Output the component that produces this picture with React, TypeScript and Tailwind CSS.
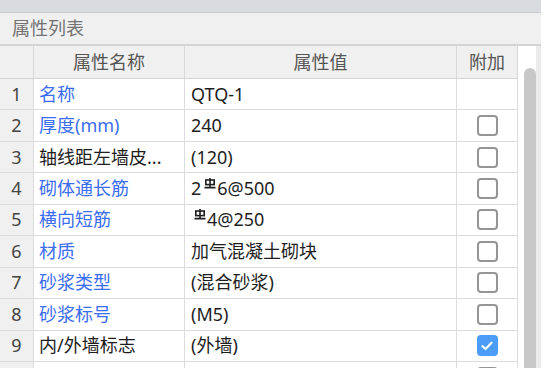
const rows = [
  { no: "1", name: "名称", blue: true, value: "QTQ-1", check: null },
  { no: "2", name: "厚度(mm)", blue: true, value: "240", check: false },
  { no: "3", name: "轴线距左墙皮...", blue: false, value: "(120)", check: false },
  { no: "4", name: "砌体通长筋", blue: true, value: "rebar1", check: false },
  { no: "5", name: "横向短筋", blue: true, value: "rebar2", check: false },
  { no: "6", name: "材质", blue: true, value: "加气混凝土砌块", check: false },
  { no: "7", name: "砂浆类型", blue: true, value: "(混合砂浆)", check: false },
  { no: "8", name: "砂浆标号", blue: true, value: "(M5)", check: false },
  { no: "9", name: "内/外墙标志", blue: false, value: "(外墙)", check: true },
  { no: "", name: "", blue: false, value: "", check: false },
];

function Rebar({ className }: { className?: string }) {
  return (
    <svg width="12" height="11" viewBox="0 0 12 11" className={className}>
      <rect x="1.8" y="2" width="8.4" height="4.6" fill="none" stroke="currentColor" strokeWidth="1.6" />
      <path d="M6 0V9.6M0.5 9.6H11.5" stroke="currentColor" strokeWidth="1.6" fill="none" />
    </svg>
  );
}

function Value({ v }: { v: string }) {
  if (v === "rebar1") {
    return (
      <>
        <span>2</span>
        <Rebar className="ml-[3px] mr-[1px] mb-[10px]" />
        <span>6@500</span>
      </>
    );
  }
  if (v === "rebar2") {
    return (
      <>
        <Rebar className="ml-[3px] mr-[1px] mb-[10px]" />
        <span>4@250</span>
      </>
    );
  }
  return <span>{v}</span>;
}

function Checkbox({ checked }: { checked: boolean }) {
  if (checked) {
    return (
      <div className="w-[21px] h-[21px] rounded-[4px] bg-[#4c9df8] flex items-center justify-center">
        <svg width="12" height="10" viewBox="0 0 12 10">
          <path d="M1.5 5.2L4.6 8L10.5 1.8" stroke="white" strokeWidth="2.2" fill="none" strokeLinecap="round" strokeLinejoin="round" />
        </svg>
      </div>
    );
  }
  return <div className="w-[21px] h-[21px] rounded-[4px] border-2 border-[#959595] bg-white" />;
}

export default function App() {
  return (
    <div className="w-[544px] h-[368px] bg-white overflow-hidden font-['Noto_Sans','Noto_Sans_CJK_SC',sans-serif] text-[18px]">
      <div className="w-[541px]">
        <div className="h-[13px] bg-[#dadbde] border-b border-[#c8c9cc]" />
        <div className="h-[33px] bg-[#f0f0f0] border-b-2 border-[#d4d4d4] flex items-center pl-[12px] text-[#737373]">
          属性列表
        </div>
        <div className="flex">
          <div className="w-[518px]">
            <div className="flex h-[33px] bg-[#f0f0f0] text-[#555555] border-b border-[#d4d4d4]">
              <div className="w-[34px] border-r border-[#d8d8d8]" />
              <div className="w-[151px] border-r border-[#d8d8d8] flex items-center justify-center">属性名称</div>
              <div className="w-[272px] border-r border-[#d8d8d8] flex items-center justify-center">属性值</div>
              <div className="w-[61px] border-r border-[#d8d8d8] flex items-center justify-center">附加</div>
            </div>
            {rows.map((r, i) => (
              <div key={i} className="flex h-[31.44px] border-b border-[#dcdcdc]">
                <div className="w-[34px] bg-[#f0f0f0] border-r border-[#dcdcdc] flex items-center justify-center text-[#444444]">
                  {r.no}
                </div>
                <div
                  className={
                    "w-[151px] border-r border-[#dcdcdc] flex items-center pl-[5px] whitespace-nowrap " +
                    (r.blue ? "text-[#3a6df0]" : "text-[#1e1e1e]")
                  }
                >
                  {r.name}
                </div>
                <div className="w-[272px] border-r border-[#dcdcdc] flex items-center pl-[6px] text-[#1e1e1e] whitespace-nowrap">
                  <Value v={r.value} />
                </div>
                <div className="w-[61px] border-r border-[#dcdcdc] flex items-center justify-center">
                  {r.check !== null && <Checkbox checked={r.check} />}
                </div>
              </div>
            ))}
          </div>
          <div className="w-[23px] bg-white flex pl-[6px] pt-[22px]">
            <div className="w-[12px] h-[400px] bg-[#c8c8c8] rounded-t-[6px]" />
            <div className="w-[5px] h-[400px] mt-[-22px] bg-[#ebebeb]" />
          </div>
        </div>
      </div>
    </div>
  );
}
